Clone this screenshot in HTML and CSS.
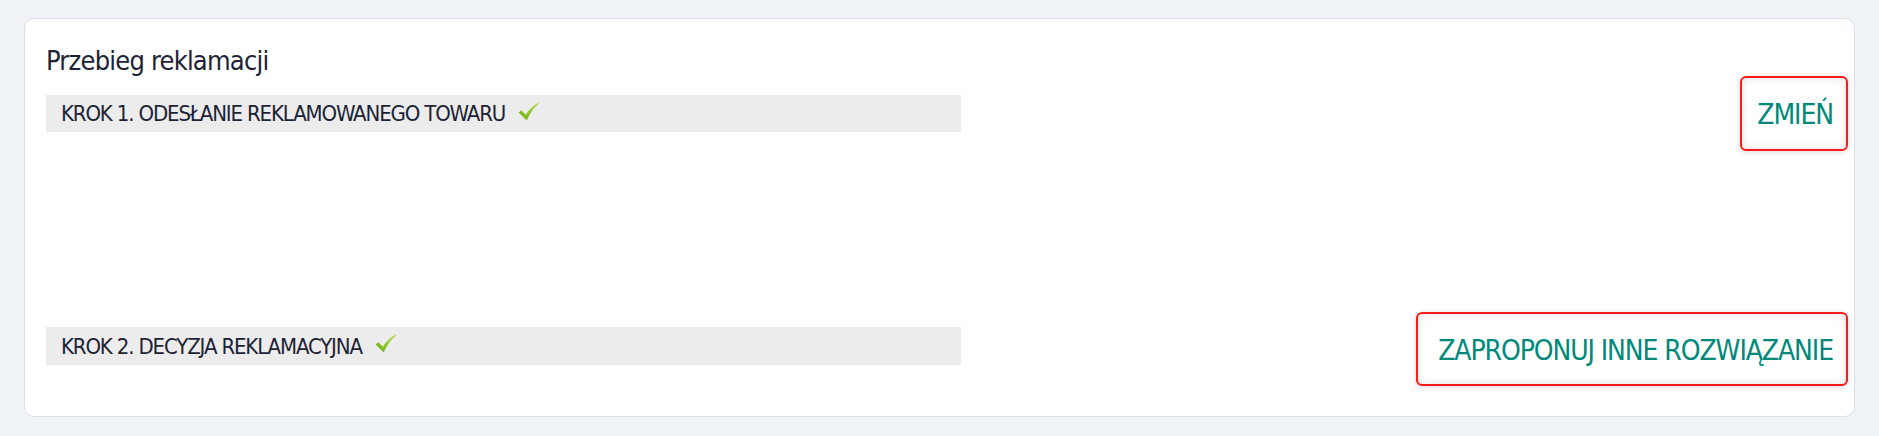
FILE: index.html
```html
<!DOCTYPE html>
<html lang="pl">
<head>
<meta charset="utf-8">
<title>Przebieg reklamacji</title>
<link rel="stylesheet" href="styles.css">
</head>
<body>
<div class="card">
  <h2 class="card-title">Przebieg reklamacji</h2>
  <div class="step-row step-row--first">
    <div class="step-bar">
      <span class="step-label">KROK 1. ODESŁANIE REKLAMOWANEGO TOWARU</span>
      <svg class="check" viewBox="0 0 24 21" width="22" height="19" aria-hidden="true"><defs><linearGradient id="g1" x1="0" y1="1" x2="1" y2="0"><stop offset="0" stop-color="#6cae10"/><stop offset="1" stop-color="#b8e04e"/></linearGradient></defs><path d="M0.5 11.5 L3.5 9 L8.5 14 C12 8.5 17 3.5 23 0.5 L23.5 1.5 C18 5.5 13.5 12 9.5 20.5 Z" fill="url(#g1)"/></svg>
    </div>
    <button class="action-btn action-btn--small">ZMIEŃ</button>
  </div>
  <div class="step-row step-row--second">
    <div class="step-bar">
      <span class="step-label">KROK 2. DECYZJA REKLAMACYJNA</span>
      <svg class="check" viewBox="0 0 24 21" width="22" height="19" aria-hidden="true"><path d="M0.5 11.5 L3.5 9 L8.5 14 C12 8.5 17 3.5 23 0.5 L23.5 1.5 C18 5.5 13.5 12 9.5 20.5 Z" fill="url(#g1)"/></svg>
    </div>
    <button class="action-btn action-btn--wide">ZAPROPONUJ INNE ROZWIĄZANIE</button>
  </div>
</div>
</body>
</html>
```
FILE: styles.css
```css
html, body {
  margin: 0;
  padding: 0;
}
body {
  background: #eff2f6;
  font-family: "DejaVu Sans Condensed", "DejaVu Sans", sans-serif;
  color: #1c2335;
  padding: 18px 24px 19px 24px;
}
.card {
  background: #fff;
  border: 1px solid #dcdfe4;
  border-radius: 10px;
  height: 399px;
  box-sizing: border-box;
  padding: 27px 6px 0 21px;
}
.card-title {
  margin: 0;
  font-weight: 400;
  font-size: 27px;
  letter-spacing: -0.8px;
  line-height: 30px;
  color: #1c2335;
}
.step-row {
  display: flex;
  align-items: center;
  justify-content: space-between;
}
.step-row--second {
  margin-top: 161px;
}
.step-row--second .step-bar {
  height: 38px;
  margin-bottom: 6px;
}
.step-bar {
  width: 915px;
  height: 37px;
  background: #ececec;
  display: flex;
  align-items: center;
  gap: 13px;
  padding-left: 15px;
  box-sizing: border-box;
}
.step-label {
  font-size: 22px;
  letter-spacing: -1.15px;
  color: #1c2335;
  white-space: nowrap;
}
.check {
  display: block;
  margin-top: -5px;
}
.action-btn {
  font-family: inherit;
  background: #fff;
  border: 2px solid #ff1a1a;
  border-radius: 6px;
  box-shadow: inset 0 0 8px rgba(0,0,0,0.12), 0 1px 6px rgba(0,0,0,0.15);
  color: #00897b;
  font-size: 28px;
  letter-spacing: -1.1px;
  height: 75px;
  padding: 2px 13px 0 8px;
  white-space: nowrap;
  text-align: right;
  cursor: pointer;
}
.action-btn--small {
  width: 108px;
}
.action-btn--wide {
  width: 432px;
  height: 74px;
}
```
